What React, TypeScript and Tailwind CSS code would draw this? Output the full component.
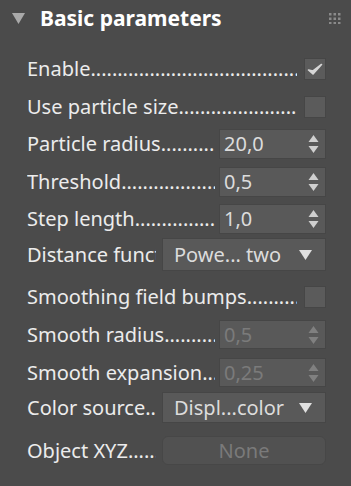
import React from "react";

const DOTS = ".".repeat(80);

function Label({ text, dots = true }: { text: string; dots?: boolean }) {
  return (
    <span className="min-w-0 flex-1 overflow-hidden whitespace-nowrap text-[20px] leading-[26px] text-[#ececec]">
      {text}
      {dots ? DOTS : ""}
    </span>
  );
}

function Check({ checked }: { checked?: boolean }) {
  return (
    <div className="ml-[7px] flex size-[22px] shrink-0 items-center justify-center border border-[#464646] bg-[#5b5b5b]">
      {checked && (
        <svg width="16" height="14" viewBox="0 0 16 14">
          <path d="M1.5 8 L6 12 L14.5 2.5 L6 9 Z" fill="#d6d6d6" stroke="#d6d6d6" strokeWidth="1.6" strokeLinejoin="round" />
        </svg>
      )}
    </div>
  );
}

function Spinner({ value, disabled, h = 30 }: { value: string; disabled?: boolean; h?: number }) {
  const arrow = disabled ? "#808080" : "#cfcfcf";
  return (
    <div
      className={`ml-[4px] flex w-[107px] shrink-0 items-center justify-between border border-[#464646] bg-[#595959] pl-[4px] pr-[6px] ${h === 30 ? "h-[30px]" : "h-[29px]"}`}
    >
      <span className={`text-[20px] leading-[26px] ${disabled ? "text-[#7b7b7b]" : "text-[#dcdcdc]"}`}>{value}</span>
      <svg width="11" height="20" viewBox="0 0 11 20">
        <path d="M5.5 1 L10.5 8 L0.5 8 Z" fill={arrow} />
        <path d="M0.5 12 L10.5 12 L5.5 19 Z" fill={arrow} />
      </svg>
    </div>
  );
}

function Dropdown({ value, h }: { value: string; h: string }) {
  return (
    <div className={`ml-[6px] flex w-[164px] shrink-0 items-center justify-between border border-[#464646] bg-[#595959] pl-[11px] pr-[13px] ${h}`}>
      <span className="text-[20px] leading-[26px] text-[#dcdcdc]">{value}</span>
      <svg width="13" height="10" viewBox="0 0 13 10">
        <path d="M0 0 L13 0 L6.5 10 Z" fill="#e0e0e0" />
      </svg>
    </div>
  );
}

export default function App() {
  return (
    <div
      className="h-[486px] w-[351px] overflow-hidden bg-[#4b4b4b]"
      style={{ fontFamily: '"Noto Sans", "Open Sans", sans-serif' }}
    >
      {/* cabecera */}
      <div className="flex h-[36px] items-center pl-[12px] pr-[10px]">
        <svg width="13" height="11" viewBox="0 0 13 11" className="shrink-0">
          <path d="M0 0 L13 0 L6.5 11 Z" fill="#a9a9a9" />
        </svg>
        <span className="ml-[15px] flex-1 text-[21px] font-bold leading-[28px] text-white">Basic parameters</span>
        <svg width="12" height="11" viewBox="0 0 12 11" className="shrink-0">
          {[0, 4.5, 9].map((y) =>
            [0, 4.5, 9].map((x) => <rect key={`${x}-${y}`} x={x} y={y} width="2.5" height="2.5" fill="#8a8a8a" />)
          )}
        </svg>
      </div>

      <div className="flex flex-col pl-[27px] pr-[25px]">
        <div className="mt-[22px] flex h-[22px] items-center">
          <Label text="Enable" />
          <Check checked />
        </div>
        <div className="mt-[16px] flex h-[22px] items-center">
          <Label text="Use particle size" />
          <Check />
        </div>
        <div className="mt-[11px] flex h-[30px] items-center">
          <Label text="Particle radius" />
          <Spinner value="20,0" />
        </div>
        <div className="mt-[8px] flex h-[30px] items-center">
          <Label text="Threshold" />
          <Spinner value="0,5" />
        </div>
        <div className="mt-[7px] flex h-[30px] items-center">
          <Label text="Step length" />
          <Spinner value="1,0" />
        </div>
        <div className="mt-[4px] flex h-[33px] items-center">
          <Label text="Distance function" dots={false} />
          <Dropdown value="Powe... two" h="h-[33px]" />
        </div>
        <div className="mt-[14px] flex h-[23px] items-center">
          <Label text="Smoothing field bumps" />
          <Check />
        </div>
        <div className="mt-[12px] flex h-[29px] items-center">
          <Label text="Smooth radius" />
          <Spinner value="0,5" disabled h={29} />
        </div>
        <div className="mt-[9px] flex h-[29px] items-center">
          <Label text="Smooth expansion" />
          <Spinner value="0,25" disabled h={29} />
        </div>
        <div className="mt-[5px] flex h-[31px] items-center">
          <Label text="Color source" />
          <Dropdown value="Displ...color" h="h-[31px]" />
        </div>
        <div className="mt-[13px] flex h-[29px] items-center">
          <Label text="Object XYZ" />
          <div className="ml-[6px] flex h-[29px] w-[164px] shrink-0 items-center justify-center rounded-[6px] border border-[#474747] bg-[#515151]">
            <span className="text-[20px] leading-[26px] text-[#7a7a7a]">None</span>
          </div>
        </div>
      </div>
    </div>
  );
}
